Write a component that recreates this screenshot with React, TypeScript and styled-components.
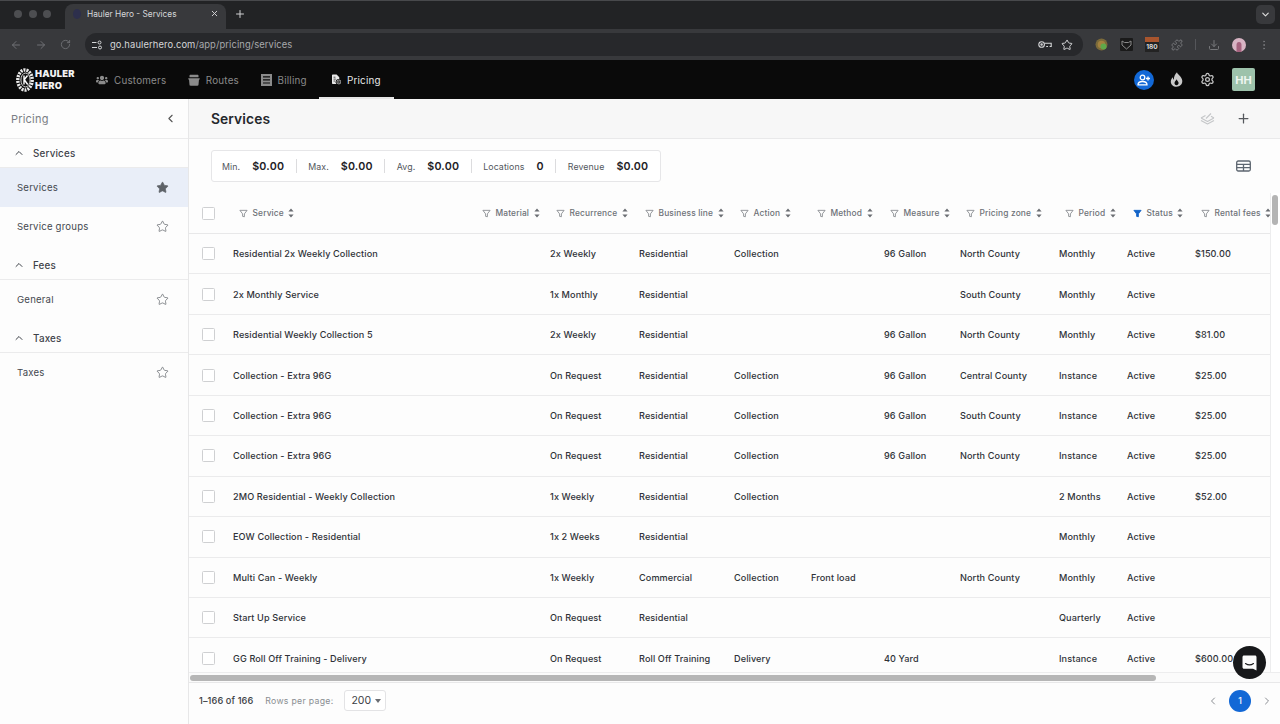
import React from "react";
import styled, { createGlobalStyle } from "styled-components";
import { FaUsers } from "react-icons/fa";
import { ChevronUp, ChevronLeft, ChevronRight, ArrowLeft, ArrowRight, RotateCw, Plus, X, Star, Settings, Download, Puzzle, ChevronDown, EllipsisVertical } from "lucide-react";

const Global = createGlobalStyle`
  html, body { margin: 0; padding: 0; width: 1280px; height: 724px; overflow: hidden; background: #fff; }
  * { box-sizing: border-box; }
  body { font-family: Inter, "Liberation Sans", sans-serif; -webkit-font-smoothing: antialiased; }
`;

const COLS = "44px 243px 74px 89px 95px 77px 73px 76px 99px 68px 68px 75px";

const Shell = styled.div`display: flex; flex-direction: column; width: 1280px; height: 724px; overflow: hidden; position: relative;`;
const TabStrip = styled.div`height: 29px; background: #222325; display: flex; align-items: flex-end; padding-left: 14px; flex: none; border-top: 1px solid #48494c;`;
const Lights = styled.div`display: flex; gap: 6.500px; align-self: center; margin: 0 14px 2px 0;`;
const Light = styled.span`width: 8px; height: 8px; border-radius: 50%; background: #4d4e51;`;
const Tab = styled.div`width: 161px; height: 25px; background: #38393c; border-radius: 8px 8px 0 0; display: flex; align-items: center; padding: 0 7px 6px 8px; color: #d7d8da; font-size: 8.300px; gap: 6px;`;
const Favicon = styled.span`width: 8px; height: 10px; border-radius: 50%; background: #2d2f4c;`;
const TabTitle = styled.span`flex: 1; white-space: nowrap;`;
const NewTab = styled.div`color: #d0d1d3; margin: 0 0 2px 8px; align-self: center; display: flex;`;
const StripEnd = styled.div`margin: 0 5px 2px auto; align-self: center; width: 19px; height: 19px; border-radius: 5px; background: #38393c; color: #dcdcdc; display: flex; align-items: center; justify-content: center;`;
const Toolbar = styled.div`height: 31px; background: #38393c; display: flex; align-items: center; padding: 0 8px 0 10px; flex: none;`;
const NavBtn = styled.span`color: #6f7074; display: flex; width: 25px;`;
const UrlBar = styled.div`width: 998px; height: 23px; border-radius: 12px; background: #27282b; display: flex; align-items: center; padding: 0 10px 0 6px; color: #d5d6d8; font-size: 9.400px;`;
const UrlHost = styled.span`margin-left: 7px; flex: 1; letter-spacing: 0.1px;`;
const UrlPath = styled.span`color: #a9aaad;`;
const UrlIcon = styled.span`display: flex; margin-left: 9px; color: #d5d6d8;`;
const Ext = styled.div`display: flex; align-items: center; gap: 12px; margin-left: 12px; color: #77787b;`;
const ExtBadge = styled.span`width: 14px; height: 15px; background: #232323; color: #ddd; font-size: 6.500px; font-weight: 700; display: flex; align-items: flex-end; justify-content: center; border-top: 5px solid #a8552e; line-height: 9px;`;
const ExtSep = styled.span`width: 1px; height: 11px; background: #55565a;`;

const AppNav = styled.div`height: 39px; background: #0a0a0a; display: flex; align-items: stretch; flex: none; padding-left: 16px; color: #fff;`;
const Logo = styled.div`display: flex; align-items: center; gap: 1px; width: 80px;`;
const LogoWords = styled.div`font-weight: 900; font-size: 9.300px; line-height: 12px; letter-spacing: 0.3px; color: #f2f2f2;`;
const MainNav = styled.nav`display: flex; align-items: stretch;`;
const NavItem = styled.a<{ $active?: boolean }>`
  display: flex; align-items: center; gap: 6px; font-size: 9.850px; letter-spacing: .2px; padding: 2px ${p => p.$active ? 13 : 0}px 0; width: ${p => p.$active ? "75px" : "auto"};
  color: ${p => p.$active ? "#e8e8e8" : "#8b8b8b"}; margin-right: ${p => p.$active ? 0 : 21.500}px;
  border-bottom: 2px solid ${p => p.$active ? "#e6e6e6" : "transparent"};
  &:nth-child(3) { margin-right: 12px; }
`;
const NavRight = styled.div`margin-left: auto; display: flex; align-items: center; margin-right: 25px; color: #c6c6c6;`;
const InviteBtn = styled.span`width: 20px; height: 20px; border-radius: 50%; background: #1268d6; display: flex; align-items: center; justify-content: center; margin-right: 15.500px;`;
const GearWrap = styled.span`display: flex; margin-left: 17px;`;
const Avatar = styled.span`width: 23px; height: 23px; border-radius: 2px; background: #9dc2ab; color: #eef5f0; font-weight: 700; font-size: 11px; display: flex; align-items: center; justify-content: center; margin-left: 17.500px;`;

const Body = styled.div`flex: 1; min-height: 0; display: flex;`;
const Sidebar = styled.aside`width: 189px; flex: none; border-right: 1px solid #e7e7e8; background: #fdfdfd; display: flex; flex-direction: column;`;
const SideHead = styled.div`height: 40px; display: flex; align-items: center; justify-content: space-between; padding: 0 11px; font-size: 11px; color: #7b7f85; border-bottom: 1px solid #ebebec; flex: none; letter-spacing: .2px;`;
const SideGroup = styled.div<{ $gap?: boolean }>`height: 29px; display: flex; align-items: center; padding-left: 13px; gap: 8px; font-size: 9.800px; font-weight: 500; color: #3e4249; letter-spacing: .2px; border-bottom: 1px solid #ebebec; margin-top: ${p => p.$gap ? 4 : 0}px; flex: none;`;
const SideItem = styled.div<{ $active?: boolean }>`height: ${p => p.$active ? 39 : 40}px; display: flex; align-items: center; justify-content: space-between; padding: 0 19px 1px 17px; font-size: 9.600px; letter-spacing: .2px; font-weight: 400; color: #44484f; background: ${p => p.$active ? "#e9eef8" : "transparent"}; flex: none;`;

const Main = styled.main`flex: 1; min-width: 0; display: flex; flex-direction: column; position: relative; background: #fdfdfd;`;
const PageHead = styled.div`height: 40px; flex: none; background: #f7f7f7; border-bottom: 1px solid #e9e9ea; display: flex; align-items: center; padding: 0 29px 0 22px;`;
const PageTitle = styled.h1`margin: 0; font-size: 13.800px; font-weight: 600; color: #24272c; flex: 1; letter-spacing: .1px;`;
const HeadAction = styled.span<{ $muted?: boolean }>`display: flex; margin-left: 21px; color: ${p => p.$muted ? "#c4c6c8" : "#55585d"};`;
const SummaryRow = styled.div`height: 54px; flex: none; display: flex; align-items: flex-start; justify-content: space-between; padding: 11px 29px 0 22px;`;
const Summary = styled.div`height: 32px; width: 450px; border: 1px solid #e6e6e8; border-radius: 3px; display: flex; align-items: center; padding: 0 10px; background: #fff;`;
const Stat = styled.div`display: flex; align-items: center; gap: 12px;`;
const StatLabel = styled.span`font-size: 8.800px; color: #53575d; letter-spacing: .1px;`;
const StatValue = styled.span`font-size: 10.700px; font-weight: 600; color: #1e2126; letter-spacing: .2px;`;
const StatSep = styled.span`width: 1px; height: 14px; background: #dcdcde; margin: 0 11.500px;`;
const TableIcon = styled.span`display: flex; color: #5d6670; margin-top: 10px;`;

const TableWrap = styled.div`flex: 1; min-height: 0; position: relative; overflow: hidden; padding-right: 10px;`;
const HeadRow = styled.div`display: grid; grid-template-columns: ${COLS}; height: 41px; align-items: center; border-bottom: 1px solid #e8e8e9;`;
const Row = styled.div`display: grid; grid-template-columns: ${COLS}; height: 40.450px; align-items: center; border-bottom: 1px solid #ebebec;`;
const CheckCell = styled.div`padding-left: 13px; display: flex;`;
const Check = styled.span`width: 13px; height: 13px; border: 1px solid #cfd0d2; border-radius: 1.500px; background: #fff;`;
const HeadCell = styled.div`display: flex; align-items: center; padding-left: 6px; gap: 4.500px; font-size: 8.400px; letter-spacing: .15px; color: #6d7177; white-space: nowrap; font-weight: 500; & > svg { flex: none; }`;
const Cell = styled.div`font-size: 9.150px; font-weight: 500; color: #2f3238; white-space: nowrap; letter-spacing: .1px;`;
const VTrack = styled.div`position: absolute; right: 0; top: 0; bottom: 0; width: 10px; background: #fff; border-left: 1px solid #ededee;`;
const VThumb = styled.div`position: absolute; right: 2px; top: 2px; width: 6px; height: 30px; border-radius: 3px; background: #b4b4b4;`;
const HTrack = styled.div`position: absolute; left: 0; right: 0; bottom: 0; height: 10px; background: #fbfbfb; border-top: 1px solid #ededee;`;
const HThumb = styled.div`position: absolute; left: 1px; top: 2px; height: 6px; width: 966px; border-radius: 3px; background: #b6b6b6;`;

const Footer = styled.div`height: 42px; flex: none; border-top: 1px solid #e8e8e9; display: flex; align-items: center; padding: 0 7px 6px 10px; background: #fdfdfd;`;
const Count = styled.span`font-size: 9.200px; font-weight: 500; color: #3b3e44; letter-spacing: .1px;`;
const RowsLabel = styled.span`font-size: 8.700px; color: #8a8d92; margin-left: 12px; letter-spacing: .3px;`;
const RowsSelect = styled.div`width: 42px; height: 21px; margin-left: 11px; border: 1px solid #e3e3e5; border-radius: 3px; display: flex; align-items: center; justify-content: space-between; padding: 0 4px 0 6px; font-size: 10.500px; color: #3b3e44; background: #fff;`;
const Caret = styled.span`width: 0; height: 0; border-left: 3.500px solid transparent; border-right: 3.500px solid transparent; border-top: 4px solid #6b6e73;`;
const Pager = styled.div`margin-left: auto; display: flex; align-items: center; gap: 10px; color: #8b8e93;`;
const PageNo = styled.span`width: 22px; height: 22px; border-radius: 50%; background: #1268d6; color: #e8f0fc; font-size: 8.500px; font-weight: 600; display: flex; align-items: center; justify-content: center;`;
const Chat = styled.div`position: absolute; right: 14px; bottom: 45px; width: 33px; height: 33px; border-radius: 50%; background: #17181a; display: flex; align-items: center; justify-content: center;`;

const Funnel = ({ filled }: { filled?: boolean }) => (
  <svg width="9" height="9" viewBox="0 0 10 10" fill={filled ? "#1464c8" : "none"} stroke={filled ? "#1464c8" : "#8a8d92"} strokeWidth="1" strokeLinejoin="round"><path d="M1 1.500h8L6 5.400V8.600L4 8.200V5.400z" /></svg>
);
const Sort = () => (
  <svg width="6" height="10" viewBox="0 0 6 10" fill="#6a6d72"><path d="M3 0.500 5.600 3.600H.4zM3 9.500 .4 6.400h5.200z" /></svg>
);
const TireLogo = () => (
  <svg width="18" height="24" viewBox="0 0 18 24" aria-hidden="true">
    <ellipse cx="9" cy="12" rx="7.200" ry="10" fill="none" stroke="#eaeaea" strokeWidth="3.400" strokeDasharray="2 1" />
    <ellipse cx="9.500" cy="12" rx="4.600" ry="7" fill="#111" stroke="#fff" strokeWidth=".8" />
    <path d="M8 7.500v9M8 12l3.500-4.500M8.500 12l3.200 4.500" stroke="#fff" strokeWidth="1.400" fill="none" />
  </svg>
);
const BinIcon = () => (
  <svg width="12" height="12" viewBox="0 0 12 12" fill="#8b8b8b"><path d="M2.500.8h7c.6 0 1 .4 1 1v1.400h-9V1.800c0-.6.4-1 1-1zM.3 4.200h11.400V5.400H11l-.5 5.400c0 .5-.5.9-1 .9h-7c-.5 0-1-.4-1-.9L1 5.400H.3z" /></svg>
);
const BillIcon = () => (
  <svg width="11" height="12" viewBox="0 0 11 12"><path fillRule="evenodd" fill="#8b8b8b" d="M0 0h11v12H0zM2 2.200v1.200h7V2.200zM2 5.300v1.200h7V5.300zM2 8.400v1.200h7V8.400z" /></svg>
);
const PriceIcon = () => (
  <svg width="12" height="13" viewBox="0 0 12 13"><path fill="#e8e8e8" d="M1 0h5l3.500 3.500V6a3.800 3.800 0 0 0-3.600 6.500H1a1 1 0 0 1-1-1V1a1 1 0 0 1 1-1z" /><path d="M2 3.500h2.500M2 6h3M2 8.500h2" stroke="#0a0a0a" strokeWidth=".9" /><circle cx="9" cy="9.700" r="2.600" fill="none" stroke="#e8e8e8" strokeWidth=".9" /><path d="M9 8.300v2.800" stroke="#e8e8e8" strokeWidth=".8" /></svg>
);
const FlameIcon = () => (
  <svg width="13" height="15" viewBox="0 0 13 15" fill="#c9c9c9"><path d="M7 .3c.5 2.400 4.900 4.200 5.300 8.500.2 3.500-2.600 5.900-5.800 5.900S.6 12.400.8 9.400C.9 7.700 1.800 6.300 3 5.300c-.1 1.100.2 2 .9 2.500C3.800 4.800 5.100 2 7 .3zM6.600 7.200c-.4 1.300-2.200 2.100-2.100 4 .1 1.200 1 2 2.100 2s2-.9 2-2.100c0-1.600-1.500-2.400-2-3.900z" fillRule="evenodd" /></svg>
);
const InviteIcon = () => (
  <svg width="14" height="12" viewBox="0 0 14 12" fill="none" stroke="#fff" strokeWidth="1.300"><circle cx="5.500" cy="3.500" r="2.300" /><path d="M1 10.800c0-2.200 2-3.300 4.500-3.300S10 8.600 10 10.800z" /><path d="M11 2.500v4M9 4.500h4" /></svg>
);
const LayersIcon = () => (
  <svg width="15" height="14" viewBox="0 0 15 14" fill="none" stroke="currentColor" strokeWidth="1.100" strokeLinejoin="round"><path d="M1 6l6.500 3.400L14 6M1 8.500l6.500 3.400L14 8.500M1 6l4.500-2.500M14 6l-3-1.700M6 6.500l5-5" /></svg>
);
const GridIcon = () => (
  <svg width="15" height="12" viewBox="0 0 15 12" fill="none" stroke="currentColor" strokeWidth="1.300"><rect x=".7" y="1" width="13.600" height="10" rx="1.500" /><path d="M.7 4.300h13.600M.7 7.600h13.600M7.500 4.300V11" /></svg>
);
const ChatIcon = () => (
  <svg width="15" height="16" viewBox="0 0 15 16" fill="none"><path d="M2 .5h11c.8 0 1.500.7 1.500 1.500v13.500L11 13.800H2c-.8 0-1.500-.7-1.500-1.500V2C.5 1.200 1.200.5 2 .5z" fill="#fbfbfb" /><path d="M3.500 8.500c2.300 1.600 5.700 1.600 8 0" stroke="#17181a" strokeWidth="1.100" strokeLinecap="round" /></svg>
);
const SiteIcon = () => (
  <svg width="12" height="10" viewBox="0 0 12 10" fill="none" stroke="#d5d6d8" strokeWidth="1"><path d="M1 2.500h4.500M1 7.500h5" /><circle cx="8.500" cy="2.500" r="1.500" /><circle cx="9" cy="7.500" r="1.500" /></svg>
);
const KeyIcon = () => (
  <svg width="14" height="9" viewBox="0 0 14 9" fill="none" stroke="#d5d6d8" strokeWidth="1.100"><circle cx="3.600" cy="4.500" r="2.800" /><circle cx="3.600" cy="4.500" r=".7" /><path d="M6.400 3.300h6.800v3.200h-1.600M10 6.500H8.200" /></svg>
);
const ColorExt = () => (
  <svg width="13" height="13" viewBox="0 0 13 13"><circle cx="6.500" cy="6.500" r="6" fill="#7b6a3a" /><circle cx="6.500" cy="6.500" r="3.800" fill="#a3813e" /><circle cx="8.500" cy="8.500" r="3" fill="#5fa84a" /></svg>
);
const FoxExt = () => (
  <svg width="13" height="13" viewBox="0 0 13 13"><rect width="13" height="13" rx="1" fill="#1a1a1a" /><path d="M2 3l2.500 1.500h4L11 3v4l-4.500 4L2 7z" fill="none" stroke="#8a8a8a" strokeWidth="1" /></svg>
);
const Profile = () => (
  <svg width="14" height="14" viewBox="0 0 14 14"><circle cx="7" cy="7" r="7" fill="#d8b4c4" /><path d="M4.500 14V7a2.500 3 0 0 1 5 0v7z" fill="#a5627e" /></svg>
);

const headers = ["Service", "Material", "Recurrence", "Business line", "Action", "Method", "Measure", "Pricing zone", "Period", "Status", "Rental fees"];
const rows: string[][] = [
  ["Residential 2x Weekly Collection", "", "2x Weekly", "Residential", "Collection", "", "96 Gallon", "North County", "Monthly", "Active", "$150.00"],
  ["2x Monthly Service", "", "1x Monthly", "Residential", "", "", "", "South County", "Monthly", "Active", ""],
  ["Residential Weekly Collection 5", "", "2x Weekly", "Residential", "", "", "96 Gallon", "North County", "Monthly", "Active", "$81.00"],
  ["Collection - Extra 96G", "", "On Request", "Residential", "Collection", "", "96 Gallon", "Central County", "Instance", "Active", "$25.00"],
  ["Collection - Extra 96G", "", "On Request", "Residential", "Collection", "", "96 Gallon", "South County", "Instance", "Active", "$25.00"],
  ["Collection - Extra 96G", "", "On Request", "Residential", "Collection", "", "96 Gallon", "North County", "Instance", "Active", "$25.00"],
  ["2MO Residential - Weekly Collection", "", "1x Weekly", "Residential", "Collection", "", "", "", "2 Months", "Active", "$52.00"],
  ["EOW Collection - Residential", "", "1x 2 Weeks", "Residential", "", "", "", "", "Monthly", "Active", ""],
  ["Multi Can - Weekly", "", "1x Weekly", "Commercial", "Collection", "Front load", "", "North County", "Monthly", "Active", ""],
  ["Start Up Service", "", "On Request", "Residential", "", "", "", "", "Quarterly", "Active", ""],
  ["GG Roll Off Training - Delivery", "", "On Request", "Roll Off Training", "Delivery", "", "40 Yard", "", "Instance", "Active", "$600.00"],
];
const stats = [["Min.", "$0.00"], ["Max.", "$0.00"], ["Avg.", "$0.00"], ["Locations", "0"], ["Revenue", "$0.00"]];

const StarOutline = () => <Star size={13} color="#5e6268" strokeWidth={1.300} />;
const StarFilled = () => <Star size={13} color="#5e6268" fill="#5e6268" strokeWidth={1.300} />;

export default function App() {
  return (
    <Shell>
      <Global />
      <TabStrip>
        <Lights><Light /><Light /><Light /></Lights>
        <Tab><Favicon /><TabTitle>Hauler Hero - Services</TabTitle><X size={9} color="#d7d8da" strokeWidth={2.500} /></Tab>
        <NewTab><Plus size={12} /></NewTab>
        <StripEnd><ChevronDown size={11} strokeWidth={2.500} /></StripEnd>
      </TabStrip>
      <Toolbar>
        <NavBtn><ArrowLeft size={12} /></NavBtn>
        <NavBtn><ArrowRight size={12} /></NavBtn>
        <NavBtn><RotateCw size={11} /></NavBtn>
        <UrlBar>
          <SiteIcon />
          <UrlHost>go.haulerhero.com<UrlPath>/app/pricing/services</UrlPath></UrlHost>
          <UrlIcon><KeyIcon /></UrlIcon>
          <UrlIcon><Star size={12} /></UrlIcon>
        </UrlBar>
        <Ext>
          <ColorExt />
          <FoxExt />
          <ExtBadge>180</ExtBadge>
          <Puzzle size={12} />
          <ExtSep />
          <Download size={12} />
          <Profile />
          <EllipsisVertical size={12} />
        </Ext>
      </Toolbar>
      <AppNav>
        <Logo><TireLogo /><LogoWords>HAULER<br />HERO</LogoWords></Logo>
        <MainNav>
          <NavItem><FaUsers size={12} />Customers</NavItem>
          <NavItem><BinIcon />Routes</NavItem>
          <NavItem><BillIcon />Billing</NavItem>
          <NavItem $active><PriceIcon />Pricing</NavItem>
        </MainNav>
        <NavRight>
          <InviteBtn><InviteIcon /></InviteBtn>
          <FlameIcon />
          <GearWrap><Settings size={15} /></GearWrap>
          <Avatar>HH</Avatar>
        </NavRight>
      </AppNav>
      <Body>
        <Sidebar>
          <SideHead>Pricing<ChevronLeft size={13} color="#555" /></SideHead>
          <SideGroup><ChevronUp size={12} />Services</SideGroup>
          <SideItem $active>Services<StarFilled /></SideItem>
          <SideItem>Service groups<StarOutline /></SideItem>
          <SideGroup $gap><ChevronUp size={12} />Fees</SideGroup>
          <SideItem>General<StarOutline /></SideItem>
          <SideGroup $gap><ChevronUp size={12} />Taxes</SideGroup>
          <SideItem>Taxes<StarOutline /></SideItem>
        </Sidebar>
        <Main>
          <PageHead>
            <PageTitle>Services</PageTitle>
            <HeadAction $muted><LayersIcon /></HeadAction>
            <HeadAction><Plus size={15} /></HeadAction>
          </PageHead>
          <SummaryRow>
            <Summary>
              {stats.map(([l, v], i) => (
                <React.Fragment key={l}>
                  {i > 0 && <StatSep />}
                  <Stat><StatLabel>{l}</StatLabel><StatValue>{v}</StatValue></Stat>
                </React.Fragment>
              ))}
            </Summary>
            <TableIcon><GridIcon /></TableIcon>
          </SummaryRow>
          <TableWrap>
            <HeadRow>
              <CheckCell><Check /></CheckCell>
              {headers.map(h => (
                <HeadCell key={h}><Funnel filled={h === "Status"} />{h}<Sort /></HeadCell>
              ))}
            </HeadRow>
            {rows.map((r, i) => (
              <Row key={i}>
                <CheckCell><Check /></CheckCell>
                {r.map((c, j) => <Cell key={j}>{c}</Cell>)}
              </Row>
            ))}
            <VTrack><VThumb /></VTrack>
            <HTrack><HThumb /></HTrack>
          </TableWrap>
          <Footer>
            <Count>1–166 of 166</Count>
            <RowsLabel>Rows per page:</RowsLabel>
            <RowsSelect>200<Caret /></RowsSelect>
            <Pager>
              <ChevronLeft size={12} />
              <PageNo>1</PageNo>
              <ChevronRight size={12} />
            </Pager>
          </Footer>
          <Chat><ChatIcon /></Chat>
        </Main>
      </Body>
    </Shell>
  );
}
